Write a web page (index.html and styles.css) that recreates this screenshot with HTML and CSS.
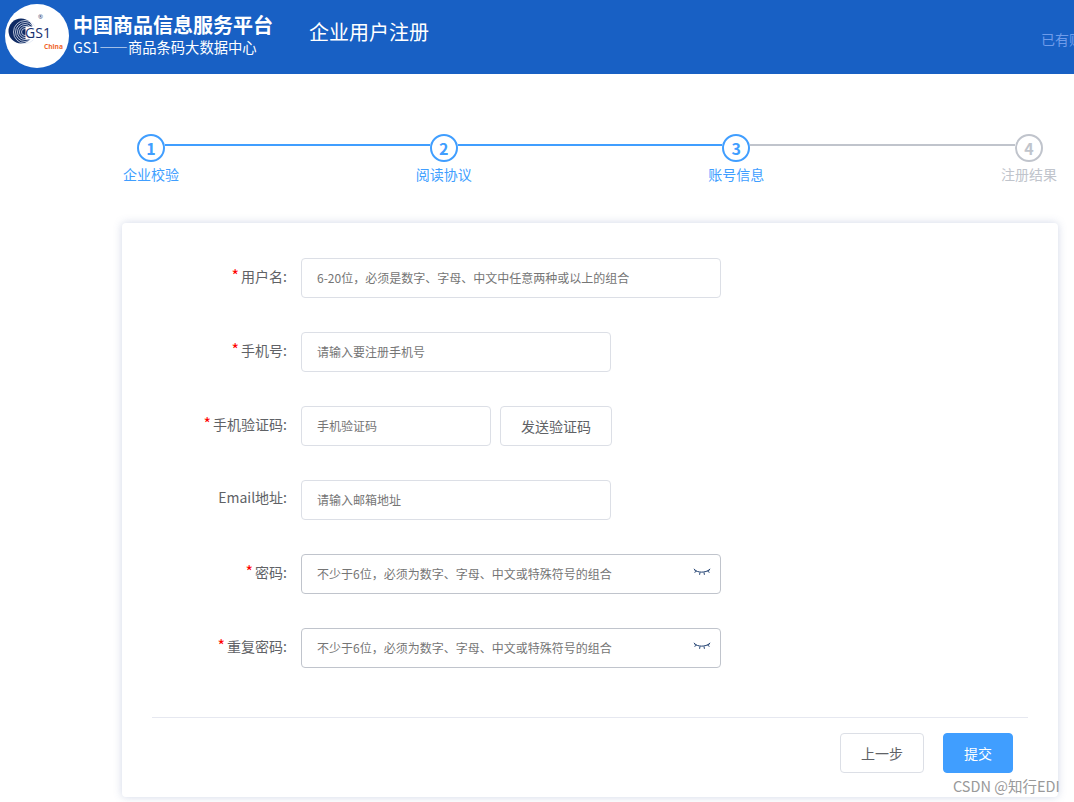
FILE: index.html
```html
<!DOCTYPE html>
<html lang="zh-CN">
<head>
<meta charset="utf-8">
<title>企业用户注册</title>
<link rel="stylesheet" href="styles.css">
</head>
<body>
<header class="topbar">
  <svg class="logo" width="64" height="64" viewBox="0 0 64 64">
    <circle cx="32" cy="32" r="32" fill="#fff"/>
    <circle cx="16" cy="27" r="12.5" fill="#0f2a63"/>
    <g fill="none" stroke="#dfe6f2" stroke-width="0.8">
      <circle cx="20" cy="28" r="3.5"/>
      <circle cx="20" cy="28" r="5.5"/>
      <circle cx="20" cy="28" r="7.5"/>
      <circle cx="20" cy="28" r="9.5"/>
      <circle cx="20" cy="28" r="11.5"/>
    </g>
    <rect x="20.5" y="22.5" width="14" height="13" fill="#fff"/>
    <text class="logo-gs" x="20" y="34">GS</text>
    <text class="logo-one" x="38" y="34">1</text>
    <text class="logo-r" x="33" y="15">®</text>
    <text class="logo-china" x="39" y="45">China</text>
  </svg>
  <div class="brand">
    <div class="brand-title">中国商品信息服务平台</div>
    <div class="brand-sub">GS1——商品条码大数据中心</div>
  </div>
  <div class="page-title">企业用户注册</div>
  <div class="login-link">已有账号？立即登录</div>
</header>

<main class="content">
  <section class="steps">
    <div class="step-track">
      <span class="dot">1</span><span class="line"></span>
      <span class="dot">2</span><span class="line"></span>
      <span class="dot">3</span><span class="line line-off"></span>
      <span class="dot dot-off">4</span>
    </div>
    <div class="step-labels">
      <span>企业校验</span><span>阅读协议</span><span>账号信息</span><span class="label-off">注册结果</span>
    </div>
  </section>

  <section class="card">
    <form class="form">
      <div class="row">
        <label class="label"><i class="req">*</i>用户名:</label>
        <input class="input input-lg" type="text" placeholder="6-20位，必须是数字、字母、中文中任意两种或以上的组合">
      </div>
      <div class="row">
        <label class="label"><i class="req">*</i>手机号:</label>
        <input class="input input-md" type="text" placeholder="请输入要注册手机号">
      </div>
      <div class="row">
        <label class="label"><i class="req">*</i>手机验证码:</label>
        <input class="input input-sm" type="text" placeholder="手机验证码">
        <button class="btn btn-code" type="button">发送验证码</button>
      </div>
      <div class="row">
        <label class="label">Email地址:</label>
        <input class="input input-md" type="text" placeholder="请输入邮箱地址">
      </div>
      <div class="row">
        <label class="label"><i class="req">*</i>密码:</label>
        <div class="pw">
          <input class="input input-lg input-dark" type="text" placeholder="不少于6位，必须为数字、字母、中文或特殊符号的组合">
          <svg class="eye" width="18" height="8" viewBox="0 0 18 8"><path d="M1 1.5C5 5 12 5 17 1.5M3.5 3.2L1.5 4.4M7 4.4L6.6 6.8M11 4.4L11.4 6.8M14.5 3.2L16.5 4.4M1 .8L2.5 2.4M17 .8L15.5 2.4" fill="none" stroke="#1f3f70" stroke-width="1"/></svg>
        </div>
      </div>
      <div class="row">
        <label class="label"><i class="req">*</i>重复密码:</label>
        <div class="pw">
          <input class="input input-lg input-dark" type="text" placeholder="不少于6位，必须为数字、字母、中文或特殊符号的组合">
          <svg class="eye" width="18" height="8" viewBox="0 0 18 8"><path d="M1 1.5C5 5 12 5 17 1.5M3.5 3.2L1.5 4.4M7 4.4L6.6 6.8M11 4.4L11.4 6.8M14.5 3.2L16.5 4.4M1 .8L2.5 2.4M17 .8L15.5 2.4" fill="none" stroke="#1f3f70" stroke-width="1"/></svg>
        </div>
      </div>
    </form>
    <div class="actions">
      <button class="btn btn-prev" type="button">上一步</button>
      <button class="btn btn-submit" type="button">提交</button>
    </div>
  </section>
</main>
<div class="watermark">CSDN @知行EDI</div>
</body>
</html>
```
FILE: styles.css
```css
* { box-sizing: border-box; }
html, body { margin: 0; padding: 0; height: 802px; overflow: hidden; background: #fff; }
body { position: relative; font-family: "Noto Sans CJK SC", "Open Sans", sans-serif; color: #606266; font-size: 14px; }

.topbar { height: 74px; background: #1860c4; color: #fff; display: flex; align-items: flex-start; padding: 4px 0 0 5px; overflow: hidden; }
.logo { flex: none; }
.logo-gs { font: 14px "Open Sans", sans-serif; fill: #16306e; }
.logo-one { font: 14px "Open Sans", sans-serif; fill: #16306e; }
.logo-r { font: 6px "Open Sans", sans-serif; fill: #16306e; }
.logo-china { font: bold 6.6px "Open Sans", sans-serif; fill: #f0652a; }
.brand { margin-left: 4px; width: 200px; flex: none; }
.brand-title { font-size: 20px; font-weight: 700; line-height: 30px; margin-top: 6px; white-space: nowrap; }
.brand-sub { font-size: 14.3px; line-height: 18px; margin-top: -2px; white-space: nowrap; }
.page-title { margin-left: 36px; margin-top: 13px; font-size: 20px; line-height: 30px; white-space: nowrap; }
.login-link { margin-left: auto; width: 33px; margin-top: 25px; font-size: 14px; line-height: 20px; color: #6f9cea; white-space: nowrap; overflow: hidden; }

.content { padding: 60px 16px 0 122px; }
.steps { margin-left: 1px; width: 934px; }
.step-track { display: flex; align-items: flex-start; padding: 0 14px; }
.dot { flex: none; width: 28px; height: 28px; border: 2px solid #409eff; border-radius: 50%; color: #409eff; font-size: 16px; font-weight: 700; line-height: 24px; text-align: center; background: #fff; }
.dot-off { border-color: #c0c4cc; color: #c0c4cc; }
.line { flex: 1; height: 2px; margin-top: 10px; background: #409eff; }
.line-off { background: #c0c4cc; }
.step-labels { display: flex; justify-content: space-between; margin-top: 2px; font-size: 14px; line-height: 20px; color: #409eff; }
.label-off { color: #c0c4cc; }

.card { margin-top: 39px; width: 936px; height: 574px; background: #fff; border-radius: 4px; box-shadow: 0 0 8px rgba(90, 110, 170, .28); padding: 35px 30px 0; }
.form { display: flex; flex-direction: column; gap: 34px; height: 460px; border-bottom: 1px solid #e6e8f0; }
.row { display: flex; align-items: flex-start; }
.label { width: 135px; margin-right: 14px; flex: none; text-align: right; line-height: 34px; white-space: nowrap; }
.req { color: #f00; font-style: normal; font-size: 16px; margin-right: 2px; }
.input { display: block; height: 40px; border: 1px solid #dcdfe6; border-radius: 4px; padding: 0 15px 2px; font: 12px/36px "Noto Sans CJK SC", sans-serif; color: #606266; background: #fff; outline: none; }
.input::placeholder { color: #757575; opacity: 1; }
.input-lg { width: 420px; }
.input-md { width: 310px; }
.input-sm { width: 190px; }
.input-dark { border-color: #c0c4cc; }
.pw { position: relative; }
.eye { position: absolute; right: 10px; top: 14px; }
.btn { height: 40px; border-radius: 4px; font: 14px "Noto Sans CJK SC", sans-serif; cursor: pointer; padding: 0; }
.btn-code { width: 112px; margin-left: 9px; background: #fff; border: 1px solid #dcdfe6; color: #606266; }
.actions { display: flex; justify-content: flex-end; gap: 19px; padding: 15px 15px 0 0; }
.btn-prev { width: 84px; background: #fff; border: 1px solid #dcdfe6; color: #606266; }
.btn-submit { width: 70px; background: #409eff; border: 1px solid #409eff; color: #fff; }

.watermark { position: absolute; left: 953px; top: 776px; font-size: 14.5px; line-height: 20px; color: #999; white-space: nowrap; }
```
